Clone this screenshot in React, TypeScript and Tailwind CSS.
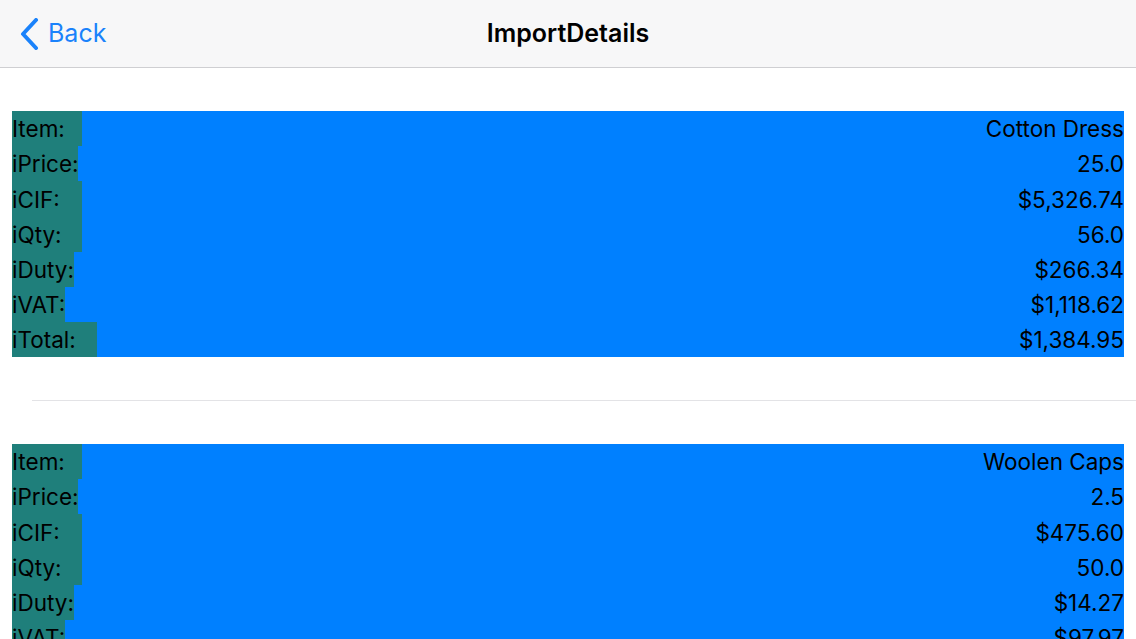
import React from 'react';

interface Row {
  label: string;
  value: string;
  labelWidth: number;
}

interface ImportItem {
  rows: Row[];
}

const ITEMS: ImportItem[] = [
  {
    rows: [
      { label: 'Item:', value: 'Cotton Dress', labelWidth: 70 },
      { label: 'iPrice:', value: '25.0', labelWidth: 66 },
      { label: 'iCIF:', value: '$5,326.74', labelWidth: 70 },
      { label: 'iQty:', value: '56.0', labelWidth: 70 },
      { label: 'iDuty:', value: '$266.34', labelWidth: 62 },
      { label: 'iVAT:', value: '$1,118.62', labelWidth: 53 },
      { label: 'iTotal:', value: '$1,384.95', labelWidth: 85 },
    ],
  },
  {
    rows: [
      { label: 'Item:', value: 'Woolen Caps', labelWidth: 70 },
      { label: 'iPrice:', value: '2.5', labelWidth: 66 },
      { label: 'iCIF:', value: '$475.60', labelWidth: 70 },
      { label: 'iQty:', value: '50.0', labelWidth: 70 },
      { label: 'iDuty:', value: '$14.27', labelWidth: 62 },
      { label: 'iVAT:', value: '$97.97', labelWidth: 53 },
      { label: 'iTotal:', value: '$112.24', labelWidth: 85 },
    ],
  },
];

function NavBar() {
  return (
    <div className="relative flex h-[68px] items-center justify-center border-b border-[#cfcfd2] bg-[#f7f7f8]">
      <button className="absolute left-[19px] top-0 flex h-full items-center gap-[9px] text-[#1a82fb]">
        <svg width="20" height="32" viewBox="0 0 20 32" fill="none">
          <path d="M17 2 L4 16 L17 30" stroke="currentColor" strokeWidth="4" strokeLinecap="round" strokeLinejoin="round" />
        </svg>
        <span className="text-[25px] leading-none">Back</span>
      </button>
      <h1 className="text-[25px] font-semibold leading-none text-black">ImportDetails</h1>
    </div>
  );
}

function ItemCell({ item }: { item: ImportItem }) {
  return (
    <div className="py-[43px] pl-3 pr-3">
      <div className="flex flex-col bg-[#0080ff]">
        {item.rows.map((row) => (
          <div key={row.label} className="flex h-[35.15px] items-stretch justify-between">
            <div
              className="flex items-center bg-[#1f7f7b] pt-[2px] text-[22.5px] leading-none text-black"
              style={{ width: row.labelWidth }}
            >
              {row.label}
            </div>
            <div className="flex items-center pt-[2px] text-[22.5px] leading-none text-black">{row.value}</div>
          </div>
        ))}
      </div>
    </div>
  );
}

export default function App() {
  return (
    <div className="h-[639px] w-[1136px] overflow-hidden bg-white font-['Inter','Liberation_Sans',sans-serif]">
      <NavBar />
      <div className="flex flex-col">
        {ITEMS.map((item, i) => (
          <div key={i}>
            <ItemCell item={item} />
            <div className="ml-8 h-px bg-[#e3e3e6]" />
          </div>
        ))}
      </div>
    </div>
  );
}
